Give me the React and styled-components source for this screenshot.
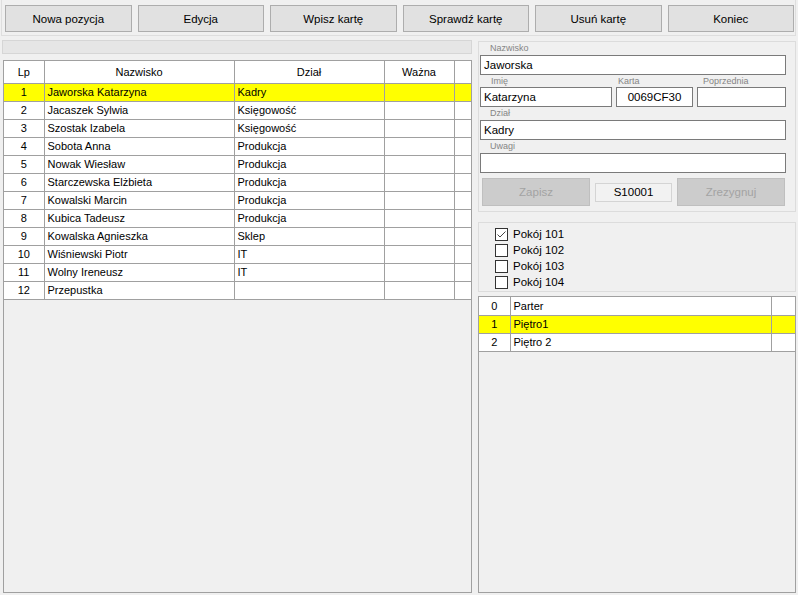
import styled, { createGlobalStyle } from "styled-components";

const GlobalStyle = createGlobalStyle`
  html, body {
    margin: 0;
    padding: 0;
    background: #f0f0f0;
    font-family: "Liberation Sans", Arial, sans-serif;
    font-size: 11px;
    color: #000000;
  }
  #root {
    width: 798px;
    height: 595px;
    overflow: hidden;
  }
  * {
    box-sizing: border-box;
  }
`;

const Window = styled.div`
  width: 798px;
  height: 595px;
  display: flex;
  flex-direction: column;
  background: #f0f0f0;
`;

const Toolbar = styled.div`
  display: flex;
  gap: 6px;
  margin-left: 1px;
  width: 795px;
  height: 36px;
  padding: 5px 1px 3px 3px;
  border: 1px solid #dedede;
  border-top: none;
`;

const ToolButton = styled.button`
  flex: 1;
  height: 27px;
  background: #e1e1e1;
  border: 1px solid #adadad;
  font-family: inherit;
  font-size: 11.5px;
  color: #000000;
  padding: 0;
`;

const Main = styled.div`
  flex: 1;
  display: flex;
  padding: 4px 0 2px 2px;
  min-height: 0;
`;

const LeftColumn = styled.div`
  width: 470px;
  display: flex;
  flex-direction: column;
`;

const StatusBar = styled.div`
  height: 14px;
  background: #e6e6e6;
  border: 1px solid #d6d6d6;
`;

const GridBox = styled.div`
  flex: 1;
  margin-top: ${(p) => p.$top || 0}px;
  margin-left: ${(p) => p.$left || 0}px;
  border: 1px solid #a0a0a0;
  background: #f0f0f0;
  overflow: hidden;
`;

const Table = styled.table`
  border-collapse: collapse;
  table-layout: fixed;
  width: 100%;
  background: #ffffff;
`;

const HeadCell = styled.th`
  height: 22px;
  font-weight: normal;
  text-align: center;
  padding: 0;
  border-right: ${(p) => (p.$last ? "none" : "1px solid #a0a0a0")};
  border-bottom: 1px solid #a0a0a0;
  white-space: nowrap;
`;

const Row = styled.tr`
  background: ${(p) => (p.$selected ? "#ffff00" : "#ffffff")};
`;

const Cell = styled.td`
  height: 18px;
  padding: 0 0 0 ${(p) => (p.$center ? 0 : 3)}px;
  text-align: ${(p) => (p.$center ? "center" : "left")};
  border-right: ${(p) => (p.$last ? "none" : "1px solid #a0a0a0")};
  border-bottom: 1px solid #a0a0a0;
  white-space: nowrap;
  overflow: hidden;
`;

const RightColumn = styled.div`
  width: 318px;
  margin-left: 6px;
  display: flex;
  flex-direction: column;
`;

const Panel = styled.div`
  border: 1px solid #dcdcdc;
  margin-top: ${(p) => p.$top || 0}px;
  padding: ${(p) => p.$pad || "0"};
`;

const FieldLabel = styled.div`
  height: ${(p) => p.$h || 13}px;
  line-height: ${(p) => p.$h || 13}px;
  font-size: 9px;
  color: #858585;
  padding-left: ${(p) => p.$indent || 0}px;
  white-space: nowrap;
`;

const FieldRow = styled.div`
  display: flex;
  gap: 4px;
`;

const Field = styled.div`
  width: ${(p) => (p.$w ? `${p.$w}px` : "auto")};
  flex: ${(p) => (p.$w ? "none" : 1)};
`;

const TextBox = styled.div`
  height: 20px;
  line-height: 18px;
  background: #ffffff;
  border: 1px solid #7a7a7a;
  padding: 0 3px;
  font-size: 11.5px;
  text-align: ${(p) => (p.$center ? "center" : "left")};
  white-space: nowrap;
  overflow: hidden;
`;

const ActionRow = styled.div`
  display: flex;
  align-items: center;
  gap: 5px;
  margin-top: 5px;
  padding-left: 2px;
`;

const DisabledButton = styled.button`
  width: 108px;
  height: 28px;
  background: #cccccc;
  border: 1px solid #bfbfbf;
  color: #a3a3a3;
  font-family: inherit;
  font-size: 11.5px;
  padding: 0;
`;

const CodeBox = styled.div`
  width: 77px;
  height: 19px;
  line-height: 17px;
  text-align: center;
  border: 1px solid #d4d4d4;
  background: #f2f2f2;
  font-size: 11.5px;
`;

const CheckRow = styled.label`
  display: flex;
  align-items: center;
  height: 16px;
  gap: 5px;
  font-size: 11.5px;
`;

const CheckBox = styled.span`
  width: 13px;
  height: 13px;
  background: #ffffff;
  border: 1px solid #333333;
  display: inline-flex;
  align-items: center;
  justify-content: center;
`;

const people = [
  ["Jaworska Katarzyna", "Kadry"],
  ["Jacaszek Sylwia", "Księgowość"],
  ["Szostak Izabela", "Księgowość"],
  ["Sobota Anna", "Produkcja"],
  ["Nowak Wiesław", "Produkcja"],
  ["Starczewska Elżbieta", "Produkcja"],
  ["Kowalski Marcin", "Produkcja"],
  ["Kubica Tadeusz", "Produkcja"],
  ["Kowalska Agnieszka", "Sklep"],
  ["Wiśniewski Piotr", "IT"],
  ["Wolny Ireneusz", "IT"],
  ["Przepustka", ""],
];

const floors = ["Parter", "Piętro1", "Piętro 2"];
const rooms = ["Pokój 101", "Pokój 102", "Pokój 103", "Pokój 104"];
const buttons = ["Nowa pozycja", "Edycja", "Wpisz kartę", "Sprawdź kartę", "Usuń kartę", "Koniec"];

const Check = ({ checked }) => (
  <CheckBox>
    {checked && (
      <svg width="11" height="11" viewBox="0 0 11 11">
        <polyline points="1.5,5.5 4,8 9.5,2.5" fill="none" stroke="#444" strokeWidth="1" />
      </svg>
    )}
  </CheckBox>
);

const App = () => {
  return (
    <Window>
      <GlobalStyle />
      <Toolbar>
        {buttons.map((b) => (
          <ToolButton key={b}>{b}</ToolButton>
        ))}
      </Toolbar>
      <Main>
        <LeftColumn>
          <StatusBar />
          <GridBox $top={6} $left={1}>
            <Table>
              <colgroup>
                <col style={{ width: 40 }} />
                <col style={{ width: 190 }} />
                <col style={{ width: 150 }} />
                <col style={{ width: 70 }} />
                <col />
              </colgroup>
              <thead>
                <tr>
                  <HeadCell>Lp</HeadCell>
                  <HeadCell>Nazwisko</HeadCell>
                  <HeadCell>Dział</HeadCell>
                  <HeadCell>Ważna</HeadCell>
                  <HeadCell $last />
                </tr>
              </thead>
              <tbody>
                {people.map(([name, dept], i) => (
                  <Row key={name} $selected={i === 0}>
                    <Cell $center>{i + 1}</Cell>
                    <Cell>{name}</Cell>
                    <Cell>{dept}</Cell>
                    <Cell />
                    <Cell $last />
                  </Row>
                ))}
              </tbody>
            </Table>
          </GridBox>
        </LeftColumn>

        <RightColumn>
          <Panel $top={1} $pad="0 9px 5px 1px">
            <FieldLabel $indent={10}>Nazwisko</FieldLabel>
            <TextBox>Jaworska</TextBox>
            <FieldRow>
              <Field $w={132}>
                <FieldLabel $h={12} $indent={11}>Imię</FieldLabel>
                <TextBox>Katarzyna</TextBox>
              </Field>
              <Field $w={77}>
                <FieldLabel $h={12} $indent={2}>Karta</FieldLabel>
                <TextBox $center>0069CF30</TextBox>
              </Field>
              <Field>
                <FieldLabel $h={12} $indent={6}>Poprzednia</FieldLabel>
                <TextBox />
              </Field>
            </FieldRow>
            <FieldLabel $indent={10}>Dział</FieldLabel>
            <TextBox>Kadry</TextBox>
            <FieldLabel $indent={10}>Uwagi</FieldLabel>
            <TextBox />
            <ActionRow>
              <DisabledButton disabled>Zapisz</DisabledButton>
              <CodeBox>S10001</CodeBox>
              <DisabledButton disabled>Zrezygnuj</DisabledButton>
            </ActionRow>
          </Panel>

          <Panel $top={10} $pad="3px 0 1px 16px">
            {rooms.map((r, i) => (
              <CheckRow key={r}>
                <Check checked={i === 0} />
                {r}
              </CheckRow>
            ))}
          </Panel>

          <GridBox $top={4}>
            <Table>
              <colgroup>
                <col style={{ width: 31 }} />
                <col style={{ width: 261 }} />
                <col />
              </colgroup>
              <tbody>
                {floors.map((f, i) => (
                  <Row key={f} $selected={i === 1}>
                    <Cell $center>{i}</Cell>
                    <Cell>{f}</Cell>
                    <Cell $last />
                  </Row>
                ))}
              </tbody>
            </Table>
          </GridBox>
        </RightColumn>
      </Main>
    </Window>
  );
};

export default App;
